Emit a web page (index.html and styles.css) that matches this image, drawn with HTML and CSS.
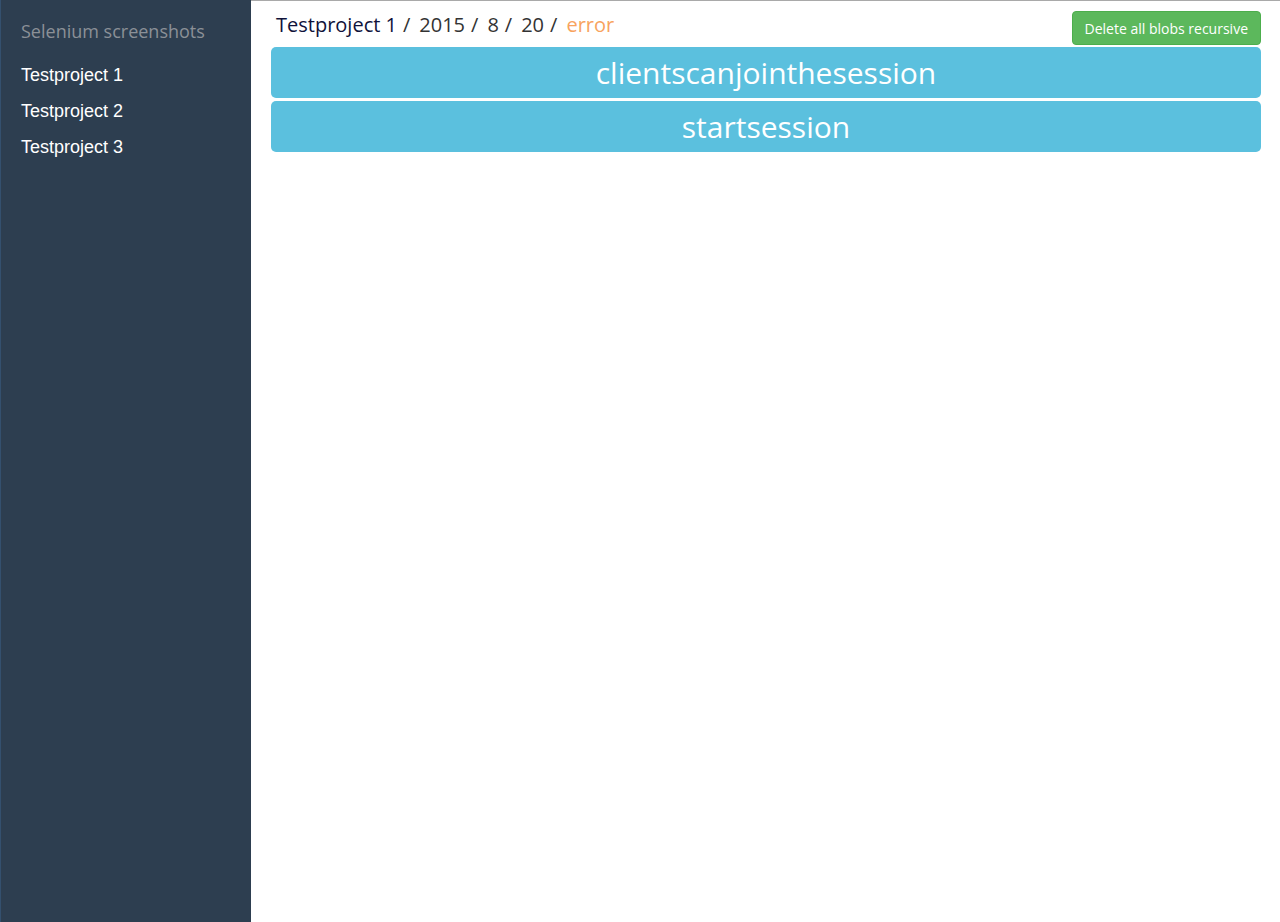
FILE: index.html
```html
<!DOCTYPE html>
<html>
<head>
<meta charset="utf-8">
<link rel="stylesheet" href="styles.css">
</head>
<body>
<div class="layout">
  <nav class="sidebar">
    <div class="brand">Selenium screenshots</div>
    <ul class="projects">
      <li>Testproject 1</li>
      <li>Testproject 2</li>
      <li>Testproject 3</li>
    </ul>
  </nav>
  <main class="main">
    <div class="topbar">
      <div class="crumbs">
        <span class="crumb-project">Testproject 1</span><span class="sep">/</span><span class="crumb">2015</span><span class="sep">/</span><span class="crumb">8</span><span class="sep">/</span><span class="crumb">20</span><span class="sep">/</span><span class="crumb-error">error</span>
      </div>
      <button class="btn-delete">Delete all blobs recursive</button>
    </div>
    <div class="list">
      <div class="item">clientscanjointhesession</div>
      <div class="item">startsession</div>
    </div>
  </main>
</div>
</body>
</html>
```

FILE: styles.css
```css
html, body {
  margin: 0;
  padding: 0;
  height: 100%;
  background: #ffffff;
}
.layout {
  display: flex;
  height: 922px;
}
.sidebar {
  flex: 0 0 251px;
  width: 251px;
  background: #2d3e50;
  border-left: 1px solid #34506e;
  box-sizing: border-box;
}
.brand {
  font-family: "Open Sans", sans-serif;
  font-size: 18px;
  color: #8b9097;
  padding: 19px 0 0 20px;
  height: 56px;
  box-sizing: border-box;
  line-height: 24px;
}
.projects {
  list-style: none;
  margin: 0;
  padding: 8px 0 0 0;
}
.projects li {
  font-family: "Liberation Sans", Arial, sans-serif;
  font-size: 18px;
  color: #ffffff;
  height: 36px;
  line-height: 22px;
  padding-left: 20px;
  box-sizing: border-box;
}
.main {
  flex: 1;
  border-top: 1px solid #a9a9a9;
  padding: 0 19px 0 20px;
}
.topbar {
  display: flex;
  justify-content: space-between;
  align-items: flex-start;
  height: 46px;
}
.crumbs {
  font-family: "Open Sans", sans-serif;
  font-size: 20px;
  color: #333333;
  padding: 10px 0 0 5px;
  line-height: 28px;
  white-space: nowrap;
}
.crumb-project {
  color: #10123a;
}
.sep {
  margin: 0 9px 0 6px;
  color: #333;
}
.crumb {
  color: #333333;
}
.crumb-error {
  color: #f8a35e;
}
.btn-delete {
  margin-top: 10px;
  background: #5cb85c;
  border: 1px solid #4cae4c;
  border-radius: 4px;
  color: #ffffff;
  font-family: "Open Sans", sans-serif;
  font-size: 14px;
  height: 34px;
  padding: 0 12px;
  white-space: nowrap;
}
.list {
  display: flex;
  flex-direction: column;
  gap: 3px;
}
.item {
  background: #5bc0de;
  border-radius: 5px;
  color: #ffffff;
  font-family: "Open Sans", sans-serif;
  font-size: 30px;
  text-align: center;
  height: 51px;
  line-height: 51px;
}
```
